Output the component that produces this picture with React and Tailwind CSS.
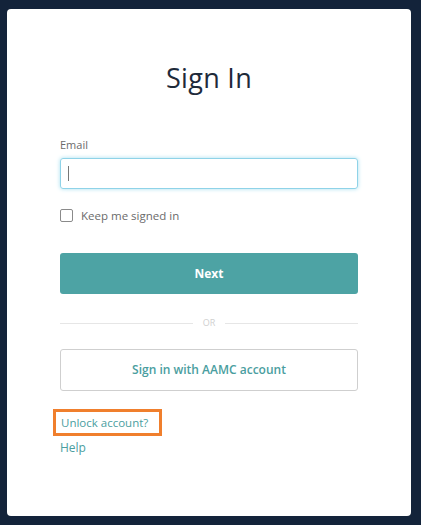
export default function App() {
  const font = { fontFamily: '"Open Sans", "Liberation Sans", sans-serif' };
  return (
    <div className="w-[421px] h-[525px] bg-[#13233a] pt-[9px] pl-[7px]" style={font}>
      <div className="w-[404px] h-[507px] bg-white rounded-[4px] px-[53px] flex flex-col">
        <h1 className="mt-[52px] text-center text-[27px] leading-[34px] text-[#1e2a3a] tracking-[0.3px]">Sign In</h1>
        <label className="mt-[43px] text-[11px] leading-[14px] text-[#6b6b6b]">Email</label>
        <div className="mt-[6px] h-[31px] border border-[#8fd3e8] rounded-[3px] shadow-[0_0_4px_#a8e0f0] flex items-center px-[7px]">
          <div className="w-px h-[15px] bg-[#777]" />
        </div>
        <div className="mt-[18px] flex items-center gap-[8px]">
          <div className="w-[13px] h-[13px] border border-[#8a8a8a] rounded-[2px]" />
          <span className="text-[11.5px] text-[#6b6b6b]">Keep me signed in</span>
        </div>
        <button className="mt-[29px] h-[41px] w-full bg-[#4da3a4] rounded-[3px] text-white text-[12px] font-bold">Next</button>
        <div className="mt-[22px] flex items-center gap-[10px]">
          <div className="flex-1 h-px bg-[#e6e6e6]" />
          <span className="text-[9px] text-[#d0d0d0]">OR</span>
          <div className="flex-1 h-px bg-[#e6e6e6]" />
        </div>
        <button className="mt-[19px] h-[42px] w-full border border-[#cfcfcf] rounded-[3px] text-[#4a9ea0] text-[12px] font-semibold">Sign in with AAMC account</button>
        <div className="mt-[18px] -ml-[7px] self-start border-[3px] border-[#f07f2d] pl-[5px] pr-[11px] h-[27px] flex items-center">
          <span className="text-[11.5px] text-[#4a9ea0]">Unlock account?</span>
        </div>
        <span className="mt-[3px] text-[12px] text-[#4a9ea0]">Help</span>
      </div>
    </div>
  );
}
